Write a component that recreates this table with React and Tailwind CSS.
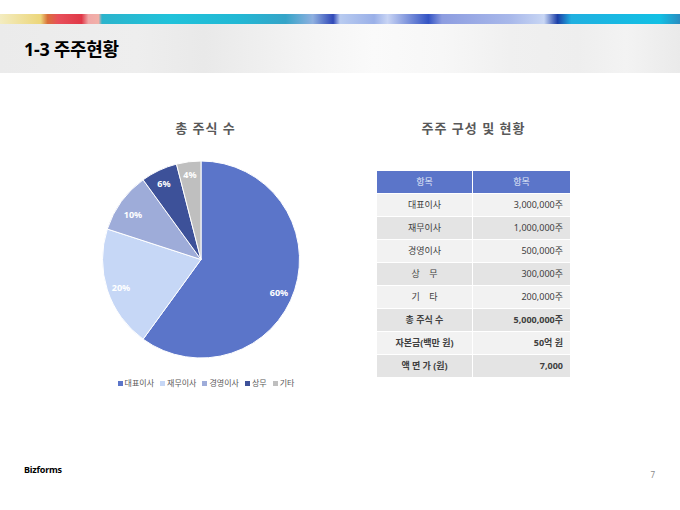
import React from 'react'

const slices = [
  { v: 60, color: '#5b75c9', label: '60%', lx: 189, ly: 155 },
  { v: 20, color: '#c6d7f6', label: '20%', lx: 31, ly: 150 },
  { v: 10, color: '#9eacd9', label: '10%', lx: 43, ly: 77 },
  { v: 6, color: '#3d5199', label: '6%', lx: 74, ly: 46 },
  { v: 4, color: '#bfbfbf', label: '4%', lx: 100, ly: 37 },
]

const legend = [
  { name: '대표이사', color: '#5b75c9' },
  { name: '재무이사', color: '#c6d7f6' },
  { name: '경영이사', color: '#9eacd9' },
  { name: '상무', color: '#3d5199' },
  { name: '기타', color: '#bfbfbf' },
]

const rows = [
  { k: '대표이사', v: '3,000,000주' },
  { k: '재무이사', v: '1,000,000주' },
  { k: '경영이사', v: '500,000주' },
  { k: '상    무', v: '300,000주' },
  { k: '기    타', v: '200,000주' },
  { k: '총 주식 수', v: '5,000,000주', bold: true },
  { k: '자본금(백만 원)', v: '50억 원', bold: true },
  { k: '액 면 가 (원)', v: '7,000', bold: true },
]

// pie paths, starting at 12 o'clock going clockwise
function Pie() {
  const cx = 111, cy = 122.5, r = 98.5
  let acc = 0
  const pt = (p) => {
    const a = (p / 100) * Math.PI * 2
    return [cx + r * Math.sin(a), cy - r * Math.cos(a)]
  }
  return (
    <svg width="230" height="240" viewBox="0 0 230 240">
      {slices.map((s) => {
        const [x1, y1] = pt(acc)
        acc += s.v
        const [x2, y2] = pt(acc)
        const large = s.v > 50 ? 1 : 0
        return (
          <path key={s.label} d={`M${cx} ${cy} L${x1} ${y1} A${r} ${r} 0 ${large} 1 ${x2} ${y2} Z`}
            fill={s.color} stroke="#fff" strokeWidth="1" />
        )
      })}
      {slices.map((s) => (
        <text key={'t' + s.label} x={s.lx} y={s.ly} textAnchor="middle" dominantBaseline="central"
          fill="#fff" fontSize="9" fontWeight="700" fontFamily="'Noto Sans', sans-serif">{s.label}</text>
      ))}
    </svg>
  )
}

export default function App() {
  return (
    <div className="w-[680px] h-[510px] bg-white overflow-hidden flex flex-col font-['Noto_Sans','Noto_Sans_CJK_KR',sans-serif]">
      <div className="h-[14px]" />
      {/* colour strip */}
      <div className="h-[10px] bg-[linear-gradient(90deg,#f3ecc0_0%,#ecd67a_6%,#d9703a_7%,#e8505a_8.5%,#e03848_12%,#f0a8a8_13%,#f2b0a8_14.5%,#2cb4cc_15%,#20c2da_25%,#22b8d4_35%,#35a4c8_42%,#8fb0e0_46%,#3048b8_49%,#b8cbf0_50%,#9ab0e8_55%,#c8d4f4_57%,#3454c4_63%,#8d9de0_65%,#a8b8ea_75%,#c8d6f4_80%,#1c40a8_82%,#20b0e0_84%,#12c0e4_97%,#2a8cc0_100%)]" />
      {/* title band */}
      <div className="h-[49px] flex items-center pl-6 bg-[linear-gradient(90deg,#ebebeb_0%,#eeeeee_20%,#e9e9e9_30%,#f4f4f4_45%,#fafafa_55%,#f7f7f7_65%,#f0f0f0_75%,#eeeeee_85%,#f3f3f3_92%,#eaeaea_100%)]">
        <h1 className="text-[18px] font-bold text-black leading-none tracking-[-0.3px]">1-3 주주현황</h1>
      </div>

      {/* main */}
      <div className="h-[382px] flex pt-[46px] pl-[90px]">
        <div className="w-[230px] flex flex-col">
          <div className="h-[18px] text-[13px] leading-[18px] font-bold text-[#595959] text-center tracking-[1px] pl-[1px]">총 주식 수</div>
          <Pie />
          <div className="h-[12px] flex items-center justify-center gap-[6px] text-[8px] text-[#595959] pl-[2px]">
            {legend.map((l) => (
              <span key={l.name} className="flex items-center gap-[2px]">
                <span className="w-[5px] h-[5px]" style={{ backgroundColor: l.color }} />
                {l.name}
              </span>
            ))}
          </div>
        </div>

        <div className="ml-[57px] w-[193px] flex flex-col">
          <div className="h-[18px] text-[13px] leading-[18px] font-bold text-[#595959] text-center tracking-[1px]">주주 구성 및 현황</div>
          <div className="mt-[34px] text-[9px]">
            <div className="h-[22px] flex bg-[#5b75c9] text-[#e4eaf8]">
              <div className="w-[96px] flex items-center justify-center border-r border-white">항목</div>
              <div className="flex-1 flex items-center justify-center">항목</div>
            </div>
            {rows.map((r, i) => (
              <div key={r.k} className={`h-[23px] flex border-t border-white text-[#404040] ${i % 2 === 0 ? 'bg-[#f2f2f2]' : 'bg-[#e4e4e4]'} ${r.bold ? 'font-bold text-[#262626]' : ''}`}>
                <div className="w-[96px] flex items-center justify-center whitespace-pre border-r border-white">{r.k}</div>
                <div className="flex-1 flex items-center justify-end pr-[7px]">{r.v}</div>
              </div>
            ))}
          </div>
        </div>
      </div>

      {/* footer */}
      <div className="flex-1 flex justify-between pl-6 pr-[25px] pt-[9px]">
        <div className="text-[9px] leading-[12px] font-bold text-black tracking-[-0.2px]">Bizforms</div>
        <div className="text-[8px] leading-[12px] text-[#8c8c8c] mt-[5px]">7</div>
      </div>
    </div>
  )
}
